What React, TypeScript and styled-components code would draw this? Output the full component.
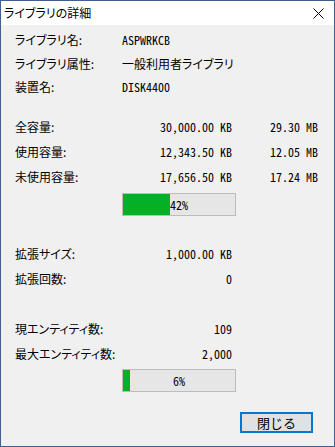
import React from "react";
import styled, { createGlobalStyle } from "styled-components";

const Global = createGlobalStyle`
  html, body { margin: 0; padding: 0; background: #f0f0f0; }
  body { width: 335px; height: 447px; overflow: hidden; }
`;

const jp = `"Noto Sans CJK JP", sans-serif`;
const mono = `"Noto Sans Mono CJK JP", "Liberation Mono", monospace`;

const Window = styled.div`
  box-sizing: border-box;
  width: 335px;
  height: 447px;
  border: 1px solid #3c6191;
  background: #f0f0f0;
  display: flex;
  flex-direction: column;
  font-family: ${jp};
  font-feature-settings: "palt";
  font-size: 12px;
  color: #000;
`;

const TitleBar = styled.div`
  height: 24px;
  background: #fff;
  display: flex;
  align-items: center;
  justify-content: space-between;
  padding: 0 10px 0 3px;
  flex-shrink: 0;
`;

const Title = styled.span`
  font-size: 12px;
  line-height: 24px;
`;

const Body = styled.div`
  display: flex;
  flex-direction: column;
  padding: 3px 0 0 14px;
`;

const Group = styled.div<{ $mt: number }>`
  display: flex;
  flex-direction: column;
  margin-top: ${(p) => p.$mt}px;
`;

const Row = styled.div<{ $h: number }>`
  display: grid;
  grid-template-columns: 107px 110px 86px;
  height: ${(p) => p.$h}px;
  align-items: center;
`;

const Label = styled.span`
  font-family: ${jp};
  white-space: nowrap;
`;

const Value = styled.span<{ $align?: string }>`
  font-family: ${mono};
  font-feature-settings: normal;
  text-align: ${(p) => p.$align || "right"};
  white-space: nowrap;
`;

const JpValue = styled.span`
  font-family: ${jp};
  white-space: nowrap;
`;

const BarWrap = styled.div<{ $mt: number }>`
  margin: ${(p) => p.$mt}px 0 0 107px;
  box-sizing: border-box;
  width: 114px;
  height: 23px;
  border: 1px solid #bcbcbc;
  background: #e6e6e6;
  position: relative;
`;

const BarFill = styled.div`
  height: 100%;
  background: #06b025;
`;

const BarText = styled.span`
  position: absolute;
  inset: 0;
  display: flex;
  align-items: center;
  justify-content: center;
  font-family: ${mono};
  font-size: 12px;
`;

const Footer = styled.div`
  display: flex;
  justify-content: flex-end;
  padding: 20px 21px 0 0;
`;

const Button = styled.button`
  box-sizing: border-box;
  width: 73px;
  height: 21px;
  border: 2px solid #0078d7;
  background: #e1e1e1;
  font-family: ${jp};
  font-size: 13px;
  padding: 0;
  color: #000;
  line-height: 17px;
`;

const Bar = ({ pct, mt }: { pct: number; mt: number }) => (
  <BarWrap $mt={mt}>
    <BarFill style={{ width: `${pct}%` }} />
    <BarText>{pct}%</BarText>
  </BarWrap>
);

const Close = () => (
  <svg width="11" height="11" viewBox="0 0 11 11">
    <path d="M0.5 0.5 L10.5 10.5 M10.5 0.5 L0.5 10.5" stroke="#000" strokeWidth="1" />
  </svg>
);

export default function App() {
  return (
    <>
      <Global />
      <Window>
        <TitleBar>
          <Title>ライブラリの詳細</Title>
          <Close />
        </TitleBar>
        <Body>
          <Group $mt={0}>
            <Row $h={23.5}>
              <Label>ライブラリ名:</Label>
              <Value $align="left">ASPWRKCB</Value>
            </Row>
            <Row $h={23.5}>
              <Label>ライブラリ属性:</Label>
              <JpValue>一般利用者ライブラリ</JpValue>
            </Row>
            <Row $h={23.5}>
              <Label>装置名:</Label>
              <Value $align="left">DISK4400</Value>
            </Row>
          </Group>
          <Group $mt={15}>
            <Row $h={25}>
              <Label>全容量:</Label>
              <Value>30,000.00 KB</Value>
              <Value>29.30 MB</Value>
            </Row>
            <Row $h={25}>
              <Label>使用容量:</Label>
              <Value>12,343.50 KB</Value>
              <Value>12.05 MB</Value>
            </Row>
            <Row $h={25}>
              <Label>未使用容量:</Label>
              <Value>17,656.50 KB</Value>
              <Value>17.24 MB</Value>
            </Row>
          </Group>
          <Bar pct={42} mt={4.5} />
          <Group $mt={24.5}>
            <Row $h={25}>
              <Label>拡張サイズ:</Label>
              <Value>1,000.00 KB</Value>
            </Row>
            <Row $h={25}>
              <Label>拡張回数:</Label>
              <Value>0</Value>
            </Row>
          </Group>
          <Group $mt={25}>
            <Row $h={25}>
              <Label>現エンティティ数:</Label>
              <Value>109</Value>
            </Row>
            <Row $h={25}>
              <Label>最大エンティティ数:</Label>
              <Value>2,000</Value>
            </Row>
          </Group>
          <Bar pct={6} mt={3.5} />
        </Body>
        <Footer>
          <Button>閉じる</Button>
        </Footer>
      </Window>
    </>
  );
}
